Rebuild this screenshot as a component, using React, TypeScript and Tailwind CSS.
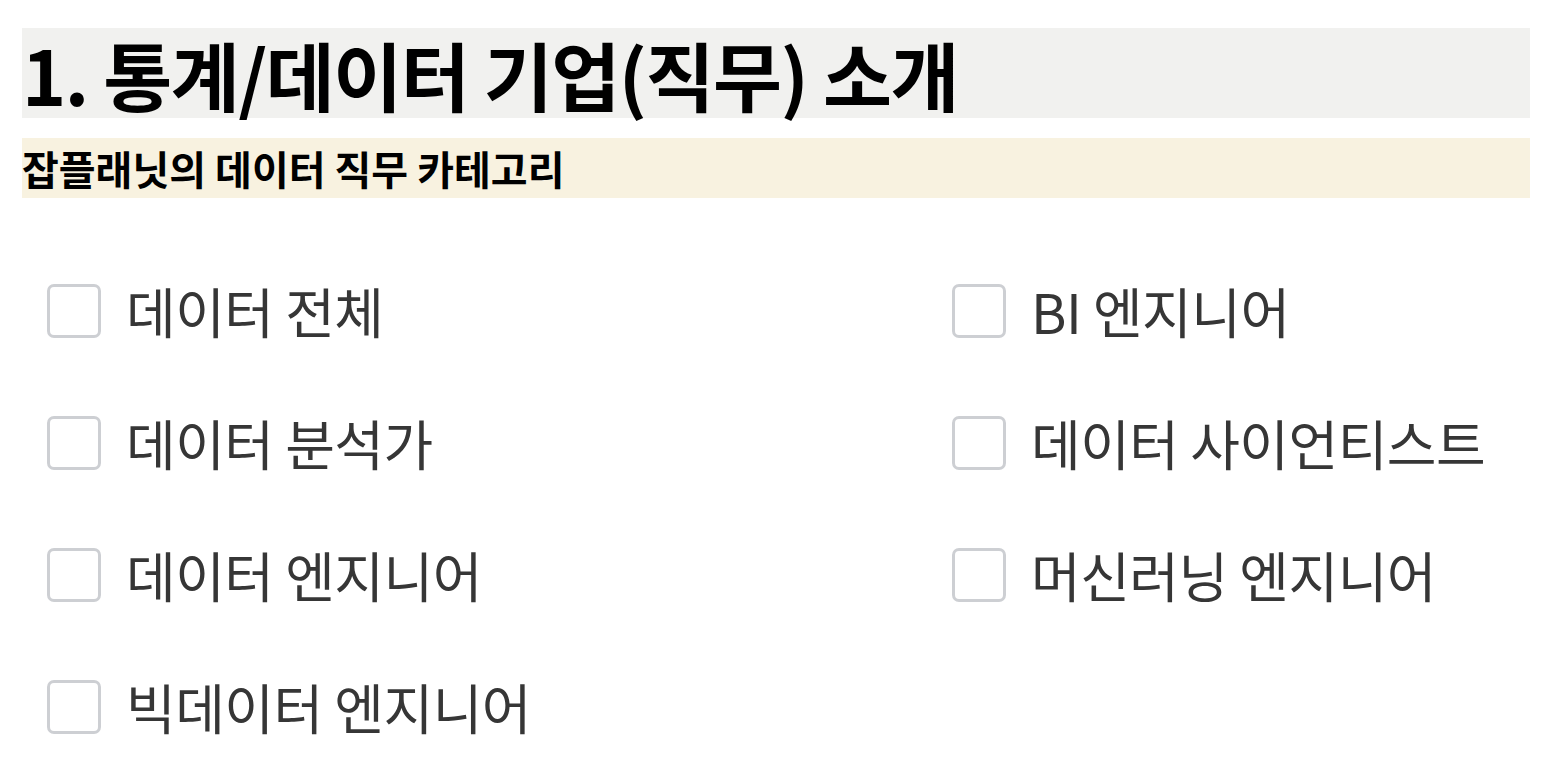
import React from 'react';

const jobs: string[][] = [
  ['데이터 전체', 'BI 엔지니어'],
  ['데이터 분석가', '데이터 사이언티스트'],
  ['데이터 엔지니어', '머신러닝 엔지니어'],
  ['빅데이터 엔지니어'],
];

const CheckItem: React.FC<{ label: string }> = ({ label }) => (
  <label className="flex items-center gap-[25px] cursor-pointer">
    <span className="w-[54px] h-[54px] rounded-[7px] border-[3px] border-[#cdcfd3] bg-white shrink-0" />
    <span className="text-[54px] leading-none text-[#363636] tracking-[-0.5px]">{label}</span>
  </label>
);

const App: React.FC = () => {
  return (
    <div
      className="w-[1552px] h-[780px] bg-white pt-[28px] px-[22px]"
      style={{ fontFamily: '"Noto Sans CJK KR", "Noto Sans", sans-serif' }}
    >
      <div className="bg-[#f1f1ef] h-[90px] flex items-center">
        <h1 className="text-[75px] font-bold leading-none text-black tracking-[-1.5px]">
          1. 통계/데이터 기업(직무) 소개
        </h1>
      </div>

      <div className="mt-[20px] bg-[#f8f2e0] h-[60px] flex items-center">
        <h2 className="text-[40px] font-bold leading-none text-black">
          잡플래닛의 데이터 직무 카테고리
        </h2>
      </div>

      <div className="mt-[86px] pl-[25px] grid grid-cols-[905px_1fr] gap-y-[78px]">
        {jobs.map((row, i) => (
          <React.Fragment key={i}>
            {row.map(label => (
              <CheckItem key={label} label={label} />
            ))}
          </React.Fragment>
        ))}
      </div>
    </div>
  );
};

export default App;
